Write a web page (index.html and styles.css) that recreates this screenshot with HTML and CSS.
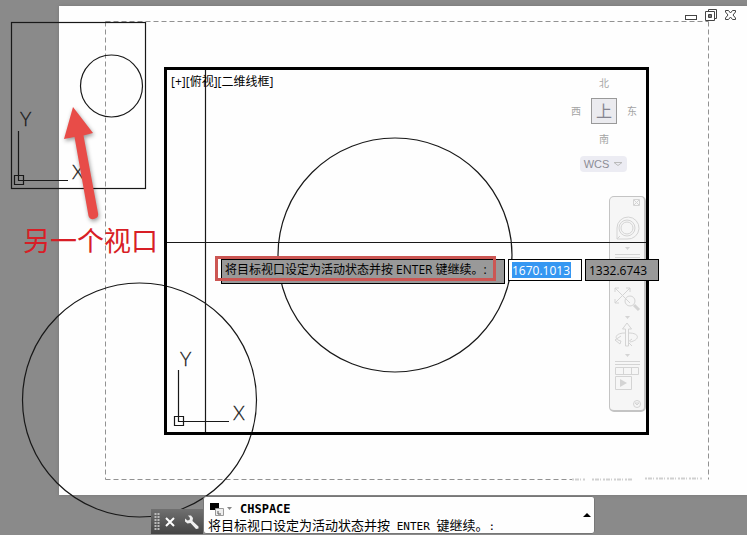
FILE: index.html
```html
<!DOCTYPE html>
<html lang="zh-CN">
<head>
<meta charset="utf-8">
<title>CHSPACE</title>
<link rel="stylesheet" href="styles.css">
</head>
<body>
<main class="workspace">
  <div class="paper"></div>
  <nav class="navbar" aria-label="导航栏">
    <svg width="34" height="213" aria-hidden="true">
      <path d="M24 3l5 5M29 3l-5 5M23.500 2.500h6v6h-6z"/>
      <path d="M7 39V31A11 11 0 1 1 17 42H7zM10 39l-3 3"/><circle cx="17" cy="31" r="6"/><circle cx="17" cy="31" r="8"/>
      <path class="mark" d="M15 50h5l-2.500 3z"/><path d="M5 57.500H30M5 60.500H30"/>
      <path d="M5 91L20 106M5 106L20 91M5 95v-4h4M16 91h4v4M5 102v4h4"/><circle cx="20" cy="104" r="5"/><path class="heavy" d="M24 108l5 5"/>
      <path class="mark" d="M15 119h5l-2.500 3z"/>
      <path d="M15.500 149V132H12.500L17 126L21.500 132H18.500V149zM15 136C4 136 4 143 11 144L10 147L5 143L11 139M19 136C30 136 30 143 20 145M22 142L18 145L22 149"/>
      <path class="mark" d="M15 157h5l-2.500 3z"/><path d="M5 164.500H30M5 167.500H30"/>
      <path d="M5.500 170.500H28.500V177.500H5.500zM13.500 170.500V177.500M21.500 170.500V177.500M5.500 179.500H21.500V192.500H5.500z"/><path class="mark" d="M10 182V190L17 186z"/>
      <circle cx="27" cy="207" r="3.500"/><path d="M25 206h4l-2 2z"/>
    </svg>
  </nav>
  <svg class="drawing" aria-hidden="true">
    <g class="thin">
      <path class="margin" d="M105.5 21.5H708.5M105.5 21.5V479.5M708.5 21.5V479.5M105.5 479.5H572"/>
      <path class="watermark" d="M572 479.5H586M592 479.5H632M645 478.5H702"/>
      <rect x="11.5" y="22.5" width="134" height="166"/>
      <circle cx="111.500" cy="86" r="31"/>
      <circle cx="139.500" cy="400" r="117"/>
      <circle cx="395" cy="255" r="117"/>
      <path d="M205.500 69V433M166 242.500H648"/>
      <path d="M18.500 131V180.500H68M14.500 175.500h9v9h-9z"/>
      <path d="M178.500 370V421.500H229M174.500 416.500h9v9h-9z"/>
    </g>
    <rect class="viewport-frame" x="165.500" y="68.500" width="482" height="365"/>
    <g class="axis">
      <text x="20" y="126">Y</text><text x="72" y="179">X</text>
      <text x="180" y="366">Y</text><text x="233" y="420">X</text>
    </g>
    <path class="arrow" d="M73 107L93 133L83.500 135.500L98 213A5 5 0 0 1 88.500 216L74.500 137L64 139Z"/>
  </svg>

  <div class="window-tools">
    <button aria-label="最小化"><svg width="14" height="14"><rect x="1.500" y="7.500" width="11" height="4"/></svg></button>
    <button aria-label="还原"><svg width="14" height="14"><path d="M4.500 3V1.500H12.500V10.500H11M1.500 3.500H10.500V12.500H1.500z"/><path class="pane" d="M4.500 6.500H7.500V9.500H4.500z"/></svg></button>
    <button aria-label="关闭"><svg width="14" height="14"><path d="M1.500 2.500H4.500L6.500 5L8.500 2.500H11.500V4L9 7L11.500 10V11.500H8.500L6.500 9L4.500 11.500H1.500V10L4 7L1.500 4z"/></svg></button>
  </div>

  <p class="view-label">[+][俯视][二维线框]</p>
  <p class="note">另一个视口</p>

  <div class="cube">
    <span class="north">北</span><span class="west">西</span>
    <button class="top">上</button>
    <span class="east">东</span><span class="south">南</span>
  </div>
  <button class="wcs">WCS <svg width="10" height="6"><path d="M1 1.500H9L5 4.500z"/></svg></button>

  <form class="dynamic-input">
    <label class="prompt" for="coord-x">将目标视口设定为活动状态并按 ENTER 键继续。:</label>
    <input class="field active" id="coord-x" value="1670.1013">
    <input class="field" aria-label="Y" value="1332.6743">
  </form>
  <div class="highlight"></div>

  <section class="command">
    <div class="handle">
      <svg class="grip" width="6" height="18" aria-hidden="true"><path d="M1.500 0V18M4.500 0V18"/></svg>
      <button aria-label="关闭"><svg width="14" height="12"><path class="close" d="M2 2L10 10M10 2L2 10"/></svg></button>
      <button aria-label="自定义"><svg width="18" height="16"><path class="wrench" d="M6 1.500L8 4L7.500 6L5.500 6.500L3 4.500L3 7.500L5.500 9.500L8.500 9L14 15L16.500 14.500L16.500 12.500L10.500 7L11 4L9 1.500z"/></svg></button>
    </div>
    <div class="console">
      <p class="history">
        <svg width="24" height="14" aria-hidden="true"><path class="black" d="M1 1H10V8H1z"/><path class="sheet" d="M6.500 6.500H14.500V13.500H6.500z"/><path class="detail" d="M9 9V12H12"/><path class="caret" d="M18 5H23L20.500 8z"/></svg>
        <strong>CHSPACE</strong>
      </p>
      <p class="line">将目标视口设定为活动状态并按<span> ENTER </span>键继续。<span>:</span></p>
      <button class="expand" aria-label="展开"><svg width="8" height="4"><path d="M0 4L4 0L8 4z"/></svg></button>
    </div>
  </section>
</main>
</body>
</html>
```
FILE: styles.css
```css
* { box-sizing: border-box; }
body { margin: 0; background: #8a8a8a; font-family: "Open Sans", "Noto Sans CJK SC", sans-serif; font-size: 12px; color: #000; }
p { margin: 0; }
button { margin: 0; padding: 0; border: 0; background: none; font: inherit; color: inherit; display: flex; align-items: center; justify-content: center; }
svg { display: block; fill: none; flex: none; }
.workspace { position: relative; min-height: 100vh; overflow: hidden; }
.paper { position: absolute; top: 6px; right: 0; left: 59px; height: 489px; background: #fefefe; box-shadow: 0 0 3px #777; }
.drawing { position: absolute; inset: 0; width: 100%; height: 100%; }
.thin { stroke: #181818; stroke-width: 1.2; }
.thin .margin { stroke: #929292; stroke-width: 1; stroke-dasharray: 5 3; }
.thin .watermark { stroke: #d0d0d0; stroke-width: 2; stroke-dasharray: 2 1 4 1 1 2; }
.viewport-frame { stroke: #000; stroke-width: 3; }
.axis { fill: #181818; stroke: #181818; stroke-width: 0.3; font-family: Lato, sans-serif; font-size: 19px; font-weight: 300; }
.arrow { fill: #e84c48; filter: drop-shadow(1px 2px 2px #0006); }

.window-tools { position: absolute; top: 8px; right: 9px; display: flex; gap: 6px; }
.window-tools svg { stroke: #444; fill: #fff; }
.window-tools .pane { fill: #777; }
.view-label { position: absolute; left: 171px; top: 73px; line-height: 17px; }
.note { position: absolute; left: 23px; top: 223px; font-size: 27px; line-height: 36px; color: #d81e26; }

.cube { position: absolute; left: 569px; top: 75px; display: grid; grid-template-columns: 14px 42px 14px; grid-template-rows: 15px 41px 15px; place-items: center; color: #a4a4a4; font-size: 10px; line-height: 14px; }
.north, .south { grid-column: 2; }
.north { grid-row: 1; }
.south { grid-row: 3; }
.west { grid-area: 2 / 1; }
.east { grid-area: 2 / 3; }
.cube .top { grid-area: 2 / 2; width: 26px; height: 26px; border: 1px solid #999; background: #ebebef; color: #858590; font-size: 16px; line-height: 20px; }
.wcs { position: absolute; left: 580px; top: 156px; width: 47px; height: 16px; gap: 4px; border-radius: 4px; background: #ececf3; color: #8c8c96; font-family: "Liberation Sans", sans-serif; font-size: 11px; }
.wcs svg { stroke: #bbb; }
.navbar { position: absolute; left: 609px; top: 196px; border: 1px solid #c4c4c4; border-width: 1px 2px 2px 1px; border-radius: 5px; background: #f6f6f6; }
.navbar svg { stroke: #d4d4d4; }
.navbar .mark { fill: #d4d4d4; stroke: none; }
.navbar .heavy { stroke-width: 3; }

.dynamic-input { position: absolute; left: 221px; top: 259px; display: flex; align-items: flex-start; gap: 3px; }
.prompt { width: 284px; height: 25px; padding: 0 3px; border: 1px solid #000; background: #999; line-height: 20px; white-space: nowrap; }
.field { width: 74px; height: 22px; margin: 0; padding: 2px 10px 2px 3px; border: 1px solid #000; border-radius: 0; outline: 0; background: #999; font: inherit; line-height: 16px; }
.field.active { background: linear-gradient(#3597f2, #3597f2) content-box, #fff; color: #fff; }
.highlight { position: absolute; left: 215px; top: 256px; width: 281px; height: 25px; border: 3px solid #cc5653; pointer-events: none; }

.command { position: absolute; left: 151px; top: 496px; display: flex; align-items: flex-end; }
.handle { display: flex; align-items: center; gap: 4px; width: 52px; height: 25px; padding-left: 3px; background: linear-gradient(#707070, #454545); }
.grip { stroke: #bbb; stroke-width: 2; stroke-dasharray: 2 1; }
.close { stroke: #fff; stroke-width: 2; }
.wrench { fill: #eee; }
.console { position: relative; width: 392px; height: 38px; padding: 3px 4px; border: 1px solid #777; border-radius: 3px; background: #fefefe; font-size: 13px; }
.history { display: flex; align-items: center; gap: 7px; height: 17px; padding-left: 1px; }
.history strong, .line span { font-family: "DejaVu Sans Mono", monospace; font-size: 11px; white-space: pre; }
.history strong { font-size: 12px; }
.line { line-height: 17px; white-space: nowrap; }
.black { fill: #000; }
.sheet { fill: #eee; stroke: #999; }
.detail { stroke: #555; }
.caret { fill: #888; }
.expand { position: absolute; right: 3px; top: 16px; }
.expand svg { fill: #000; }
```
